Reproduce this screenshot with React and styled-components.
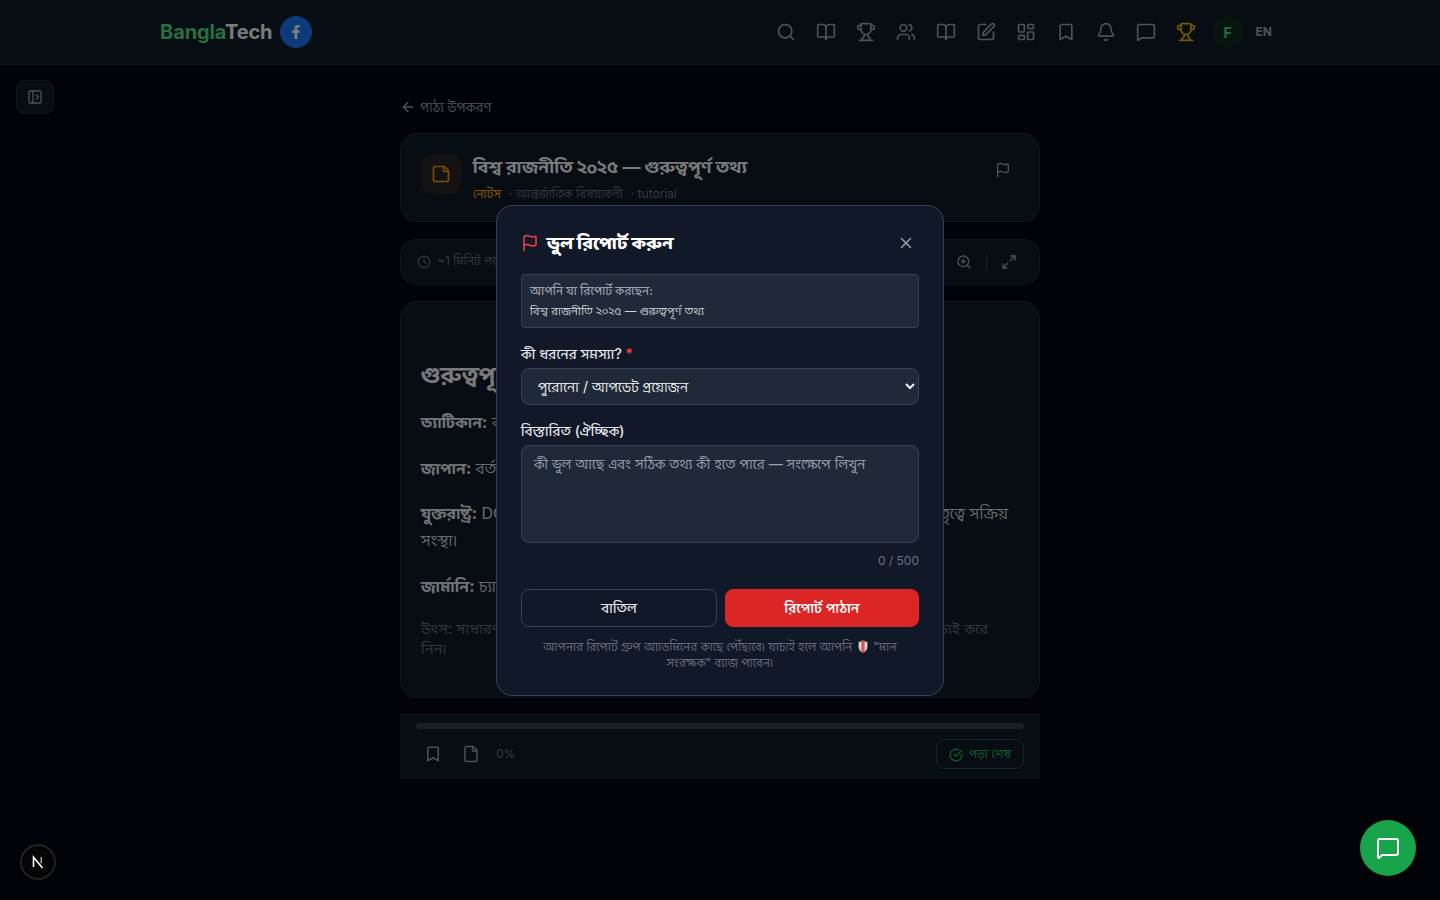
import styled, { createGlobalStyle } from "styled-components";
import {
  ArrowLeft,
  Bell,
  Bookmark,
  BookOpen,
  CircleCheckBig,
  Clock,
  File,
  Flag,
  LayoutDashboard,
  Maximize2,
  MessageSquare,
  PanelLeftOpen,
  Search,
  SquarePen,
  StickyNote,
  Trophy,
  Users,
  X,
  ZoomIn,
} from "lucide-react";
import { FaFacebookF } from "react-icons/fa";

const GlobalStyle = createGlobalStyle`
  * { box-sizing: border-box; }
  html, body { margin: 0; padding: 0; }
  body {
    background: #030712;
    color: #f3f4f6;
    font-family: Inter, "Baloo Da 2", "Noto Sans", sans-serif;
    min-height: 100vh;
  }
`;

const Header = styled.header`
  height: 65px;
  background: #111827;
  border-bottom: 1px solid #1f2937;
`;

const HeaderInner = styled.div`
  width: 1120px;
  height: 64px;
  margin: 0 auto;
  display: flex;
  align-items: center;
  justify-content: space-between;
`;

const Brand = styled.div`
  display: flex;
  align-items: center;
  gap: 8px;
`;

const Logo = styled.span`
  font-size: 20px;
  font-weight: 700;
  letter-spacing: -0.1px;
  color: #f3f4f6;
  span { color: #4ade80; }
`;

const FbBadge = styled.span`
  width: 32px;
  height: 32px;
  border-radius: 50%;
  background: #1877f2;
  color: #fff;
  display: flex;
  align-items: center;
  justify-content: center;
`;

const Nav = styled.nav`
  display: flex;
  align-items: center;
  gap: 4px;
  margin-right: 8px;
`;

const NavButton = styled.span`
  width: 36px;
  height: 36px;
  display: flex;
  align-items: center;
  justify-content: center;
  color: ${(p) => (p.$gold ? "#eab308" : "#9ca3af")};
`;

const Avatar = styled.span`
  width: 32px;
  height: 32px;
  margin-left: 4px;
  border-radius: 50%;
  background: #10291d;
  color: #4ade80;
  font-size: 14px;
  font-weight: 700;
  display: flex;
  align-items: center;
  justify-content: center;
`;

const Lang = styled.span`
  margin-left: 8px;
  font-size: 12px;
  font-weight: 700;
  line-height: 16px;
  margin-top: -1px;
  color: #9ca3af;
`;

const SideToggle = styled.button`
  position: fixed;
  left: 16px;
  top: 80px;
  width: 38px;
  height: 34px;
  border-radius: 8px;
  border: 1px solid #1f2937;
  background: #111827;
  color: #9ca3af;
  display: flex;
  align-items: center;
  justify-content: center;
  padding: 0;
`;

const Main = styled.main`
  width: 640px;
  margin: 0 auto;
  padding-top: 32px;
  display: flex;
  flex-direction: column;
`;

const BackLink = styled.div`
  display: flex;
  align-items: center;
  gap: 4px;
  height: 20px;
  margin-bottom: 16px;
  font-size: 13.6px;
  line-height: 22px;
  color: #9ca3af;
`;

const Card = styled.section`
  background: #111827;
  border: 1px solid #1f2937;
  border-radius: 16px;
`;

const TitleCard = styled(Card)`
  height: 89px;
  padding: 20px;
  display: flex;
  gap: 12px;
  margin-bottom: 17px;
`;

const NoteIcon = styled.span`
  flex: none;
  width: 40px;
  height: 40px;
  border-radius: 12px;
  background: rgba(245, 158, 11, 0.1);
  color: #f59e0b;
  display: flex;
  align-items: center;
  justify-content: center;
`;

const TitleBody = styled.div`
  flex: 1;
  min-width: 0;
`;

const PageTitle = styled.h1`
  margin: 0;
  font-size: 18px;
  font-weight: 700;
  line-height: 26px;
  color: #f3f4f6;
`;

const Meta = styled.div`
  display: flex;
  gap: 8px;
  margin-top: 6px;
  font-size: 12px;
  line-height: 16px;
  color: #6b7280;
`;

const MetaType = styled.span`
  font-weight: 500;
  color: #f59e0b;
`;

const CardFlag = styled.span`
  flex: none;
  color: #9ca3af;
  margin: 8px 8px 0 0;
`;

const ToolCard = styled(Card)`
  height: 46px;
  padding: 0 22px 0 16px;
  display: flex;
  align-items: center;
  justify-content: space-between;
  margin-bottom: 16px;
`;

const ReadTime = styled.span`
  display: flex;
  align-items: center;
  gap: 6px;
  font-size: 12px;
  color: #6b7280;
`;

const ToolGroup = styled.div`
  display: flex;
  align-items: center;
  gap: 14px;
  color: #9ca3af;
`;

const ToolDivider = styled.span`
  width: 1px;
  height: 16px;
  background: #374151;
`;

const Article = styled(Card)`
  height: 397px;
  padding: 57px 20px 0;
  margin-bottom: 16px;
  color: #d1d5db;
`;

const ArticleHeading = styled.h2`
  margin: 0 0 18px;
  font-size: 24px;
  font-weight: 700;
  line-height: 32px;
  color: #f3f4f6;
`;

const Para = styled.p`
  margin: 0 0 18.4px;
  font-size: 16px;
  line-height: 27.2px;
  strong { font-weight: 700; color: #e5e7eb; }
`;

const Source = styled.p`
  margin: 19px 0 0;
  font-size: 15px;
  line-height: 20px;
  color: #6b7280;
`;

const BottomBar = styled.footer`
  height: 65px;
  padding: 8px 16px 0;
  background: #111827;
  border-top: 1px solid #1f2937;
`;

const Track = styled.div`
  height: 6px;
  border-radius: 3px;
  background: #374151;
`;

const BarRow = styled.div`
  display: flex;
  align-items: center;
  margin-top: 10px;
  height: 30px;
  color: #9ca3af;
`;

const BarIcons = styled.div`
  display: flex;
  align-items: center;
  gap: 20px;
  padding-left: 8px;
`;

const Percent = styled.span`
  margin-left: 16px;
  padding-bottom: 2px;
  font-size: 12px;
  color: #6b7280;
`;

const DoneButton = styled.button`
  margin-left: auto;
  height: 30px;
  width: 88px;
  padding: 1px 0 0;
  border-radius: 8px;
  border: 1px solid rgba(34, 197, 94, 0.4);
  background: transparent;
  color: #22c55e;
  font-family: inherit;
  font-size: 12px;
  display: flex;
  align-items: center;
  justify-content: center;
  gap: 6px;
`;

const Overlay = styled.div`
  position: fixed;
  inset: 0;
  z-index: 40;
  background: rgba(0, 0, 0, 0.5);
  display: flex;
  align-items: center;
  justify-content: center;
`;

const Modal = styled.div`
  width: 448px;
  padding: 24px;
  background: #111827;
  border: 1px solid #374151;
  border-radius: 16px;
`;

const ModalHead = styled.div`
  display: flex;
  align-items: center;
  gap: 8px;
  height: 26px;
  margin-bottom: 18px;
  color: #ef4444;
`;

const ModalTitle = styled.h2`
  flex: 1;
  margin: 0;
  font-size: 18px;
  line-height: 26px;
  font-weight: 800;
  color: #fff;
`;

const CloseButton = styled.button`
  border: 0;
  padding: 0;
  margin-right: 4px;
  background: transparent;
  color: #9ca3af;
  display: flex;
`;

const InfoBox = styled.div`
  height: 54px;
  padding: 6px 8px;
  margin-bottom: 16px;
  background: #1f2937;
  border: 1px solid #374151;
  border-radius: 4px;
  font-size: 12px;
  line-height: 20px;
  font-weight: 500;
  color: #9ca3af;
  span { display: block; font-size: 11.7px; font-weight: 400; color: #d1d5db; }
`;

const Label = styled.label`
  display: block;
  height: 20px;
  margin-bottom: 4px;
  font-size: 14px;
  line-height: 20px;
  font-weight: 500;
  color: #e5e7eb;
  span { color: #ef4444; }
`;

const Select = styled.select`
  display: block;
  width: 100%;
  height: 37px;
  margin-bottom: 16px;
  padding: 0 12px;
  background: #1f2937;
  border: 1px solid #374151;
  border-radius: 8px;
  font-family: inherit;
  font-size: 14px;
  color: #f3f4f6;
`;

const TextArea = styled.textarea`
  display: block;
  width: 100%;
  height: 98px;
  padding: 8px 12px;
  background: #1f2937;
  border: 1px solid #374151;
  border-radius: 8px;
  font-family: inherit;
  font-size: 14px;
  line-height: 20px;
  resize: none;
  color: #f3f4f6;
  &::placeholder { color: #9ca3af; opacity: 1; }
`;

const Count = styled.div`
  margin-top: 10px;
  height: 16px;
  text-align: right;
  font-size: 12px;
  line-height: 16px;
  color: #6b7280;
`;

const Actions = styled.div`
  display: grid;
  grid-template-columns: 196fr 194fr;
  gap: 8px;
  margin-top: 20px;
`;

const CancelButton = styled.button`
  height: 38px;
  padding: 4px 0 0;
  border: 1px solid #374151;
  border-radius: 8px;
  background: transparent;
  color: #e5e7eb;
  font-family: inherit;
  font-size: 14px;
  font-weight: 500;
`;

const SendButton = styled(CancelButton)`
  border-color: #dc2626;
  background: #dc2626;
  color: #fff;
  font-weight: 600;
`;

const Note = styled.p`
  margin: 12px 0 0;
  padding: 0 10px;
  text-align: center;
  font-size: 12px;
  line-height: 16px;
  color: #6b7280;
`;

const ShieldMark = styled.svg`
  width: 10px;
  height: 13px;
  margin: 0 2px;
  vertical-align: -2px;
`;

const ChatFab = styled.button`
  position: fixed;
  right: 24px;
  bottom: 24px;
  z-index: 50;
  width: 56px;
  height: 56px;
  border: 0;
  border-radius: 50%;
  background: #16a34a;
  color: #fff;
  display: flex;
  align-items: center;
  justify-content: center;
`;

const NextBadge = styled.div`
  position: fixed;
  left: 20px;
  bottom: 20px;
  z-index: 50;
  width: 36px;
  height: 36px;
  border-radius: 50%;
  background: #050505;
  border: 2px solid #222;
  display: flex;
  align-items: center;
  justify-content: center;
`;

const navIcons = [Search, BookOpen, Trophy, Users, BookOpen, SquarePen, LayoutDashboard, Bookmark, Bell, MessageSquare];

const App = () => {
  return (
    <>
      <GlobalStyle />
      <Header>
        <HeaderInner>
          <Brand>
            <Logo>
              <span>Bangla</span>Tech
            </Logo>
            <FbBadge>
              <FaFacebookF size={14} />
            </FbBadge>
          </Brand>
          <Nav>
            {navIcons.map((Icon, i) => (
              <NavButton key={i}>
                <Icon size={20} />
              </NavButton>
            ))}
            <NavButton $gold>
              <Trophy size={20} />
            </NavButton>
            <Avatar>F</Avatar>
            <Lang>EN</Lang>
          </Nav>
        </HeaderInner>
      </Header>

      <SideToggle>
        <PanelLeftOpen size={16} />
      </SideToggle>

      <Main>
        <BackLink>
          <ArrowLeft size={16} /> পাঠ্য উপকরণ
        </BackLink>
        <TitleCard>
          <NoteIcon>
            <StickyNote size={20} />
          </NoteIcon>
          <TitleBody>
            <PageTitle>বিশ্ব রাজনীতি ২০২৫ — গুরুত্বপূর্ণ তথ্য</PageTitle>
            <Meta>
              <MetaType>নোটস</MetaType>
              <span>· আন্তর্জাতিক বিষয়াবলী</span>
              <span>· tutorial</span>
            </Meta>
          </TitleBody>
          <CardFlag>
            <Flag size={16} />
          </CardFlag>
        </TitleCard>
        <ToolCard>
          <ReadTime>
            <Clock size={14} /> ~1 মিনিট পড়া
          </ReadTime>
          <ToolGroup>
            <ZoomIn size={16} />
            <ToolDivider />
            <Maximize2 size={16} />
          </ToolGroup>
        </ToolCard>
        <Article>
          <ArticleHeading>গুরুত্বপূর্ণ তথ্য</ArticleHeading>
          <Para>
            <strong>ভ্যাটিকান:</strong> বর্তমান পোপের নেতৃত্বে পরিচালিত।
          </Para>
          <Para>
            <strong>জাপান:</strong> বর্তমান প্রধানমন্ত্রীর নেতৃত্বে সরকার।
          </Para>
          <Para>
            <strong>যুক্তরাষ্ট্র:</strong> DC থেকে পরিচালিত প্রশাসনের নানা দপ্তর ও বিভিন্ন দেশের কূটনৈতিক ও নেতৃত্বে সক্রিয় সংস্থা।
          </Para>
          <Para>
            <strong>জার্মানি:</strong> চ্যান্সেলরের নেতৃত্বে সরকার।
          </Para>
          <Source>
            উৎস: সাধারণ জ্ঞানভিত্তিক তথ্য, পরীক্ষার আগে সর্বশেষ তথ্য অবশ্যই সরকারি সূত্র থেকে যাচাই করে
            <br />
            নিন।
          </Source>
        </Article>
        <BottomBar>
          <Track />
          <BarRow>
            <BarIcons>
              <Bookmark size={18} />
              <File size={18} />
            </BarIcons>
            <Percent>0%</Percent>
            <DoneButton>
              <CircleCheckBig size={14} /> পড়া শেষ
            </DoneButton>
          </BarRow>
        </BottomBar>
      </Main>

      <Overlay>
        <Modal>
          <ModalHead>
            <Flag size={18} />
            <ModalTitle>ভুল রিপোর্ট করুন</ModalTitle>
            <CloseButton>
              <X size={18} />
            </CloseButton>
          </ModalHead>
          <InfoBox>
            আপনি যা রিপোর্ট করছেন:
            <span>বিশ্ব রাজনীতি ২০২৫ — গুরুত্বপূর্ণ তথ্য</span>
          </InfoBox>
          <Label>
            কী ধরনের সমস্যা? <span>*</span>
          </Label>
          <Select defaultValue="old">
            <option value="old">পুরোনো / আপডেট প্রয়োজন</option>
          </Select>
          <Label>বিস্তারিত (ঐচ্ছিক)</Label>
          <TextArea placeholder="কী ভুল আছে এবং সঠিক তথ্য কী হতে পারে — সংক্ষেপে লিখুন" />
          <Count>0 / 500</Count>
          <Actions>
            <CancelButton>বাতিল</CancelButton>
            <SendButton>রিপোর্ট পাঠান</SendButton>
          </Actions>
          <Note>
            আপনার রিপোর্ট গ্রুপ অ্যাডমিনের কাছে পৌঁছাবে। যাচাই হলে আপনি{" "}
            <ShieldMark viewBox="0 0 10 13">
              <path d="M5 .4 9.6 2v5c0 3-2.4 5-4.6 5.8C2.8 12 .4 10 .4 7V2z" fill="#d1d5db" stroke="#374151" strokeWidth=".6" />
              <path d="M3.4 1 5 .5 6.6 1v10.8L5 12.7l-1.6-.9z" fill="#e0533f" />
            </ShieldMark>{" "}
            "মান সংরক্ষক" ব্যাজ পাবেন।
          </Note>
        </Modal>
      </Overlay>

      <NextBadge>
        <svg width="16" height="16" viewBox="0 0 16 16" fill="none">
          <path d="M3.5 13V3.2L12.5 14" stroke="#fff" strokeWidth="1.6" />
          <path d="M11.2 3v6.5" stroke="#aaa" strokeWidth="1.4" />
        </svg>
      </NextBadge>
      <ChatFab>
        <MessageSquare size={24} />
      </ChatFab>
    </>
  );
};

export default App;
